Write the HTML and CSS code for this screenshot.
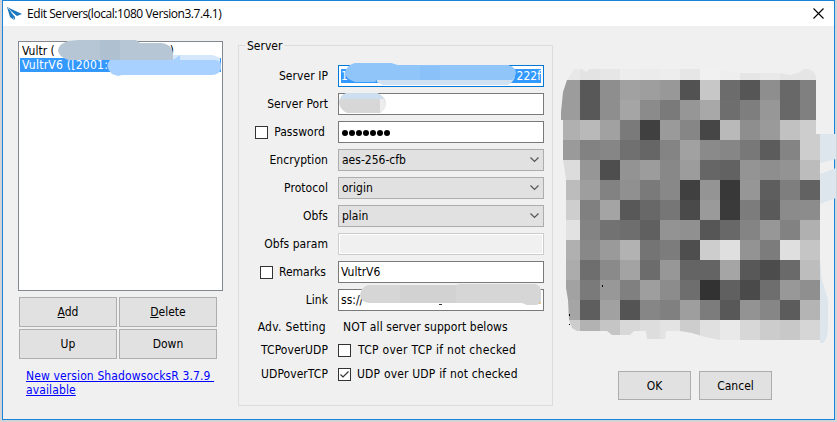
FILE: index.html
```html
<!DOCTYPE html>
<html lang="en">
<head>
<meta charset="utf-8">
<title>Edit Servers</title>
<link rel="stylesheet" href="styles.css">
</head>
<body>
<div class="window">
  <header class="titlebar">
    <svg class="logo" width="16" height="16" viewBox="0 0 16 16"><path d="M0 1L15 8L10 10L3 5L8 11L8 14L6 11L3 11Z" fill="#1d78bd"/><path d="M3 11L6 11L7 14Z" fill="#1d78bd"/><path d="M1 2L9 10" stroke="#fff" stroke-width=".6"/></svg>
    <h1 class="title">Edit Servers(local:1080 Version3.7.4.1)</h1>
    <svg class="close" width="11" height="11" viewBox="0 0 11 11"><path d="M.5 .5L10.5 10.5M10.5 .5L.5 10.5" stroke="#000" stroke-width="1.1"/></svg>
  </header>
  <main class="content">
    <section class="servers">
      <div class="list">
        <div class="item">Vultr (<span class="paren">)</span></div>
        <div class="item selected">VultrV6 ([2001:</div>
        <svg class="smudge list-smudge" width="166" height="37" viewBox="0 0 166 37"><path d="M10 1L20 0H78L82 3H103C112 4 115 9 115 14V20H10Q0 16 0 10Q1 4 10 1Z" fill="#b6c6d4"/><path d="M42 0H62V20H42Z" fill="#afc1d0"/><path d="M115 15H155L162 18V22H115Z" fill="#d5e7fa"/><path d="M52 20H122V15L115 20H158Q163 21 163 25V29Q161 35 153 35H64L60 36L54 34Q48 28 50 23Z" fill="#a9d1ff"/></svg>
      </div>
      <div class="actions">
        <button class="btn"><span><u>A</u>dd</span></button>
        <button class="btn"><span><u>D</u>elete</span></button>
        <button class="btn">Up</button>
        <button class="btn">Down</button>
      </div>
      <a class="update" href="#">New version ShadowsocksR 3.7.9&nbsp;<br>available</a>
    </section>

    <fieldset class="server">
      <legend>Server</legend>
      <div class="row"><label class="label">Server IP</label><div class="field focus"><span class="marked"><span>1</span><span>222f</span></span>
        <svg class="smudge ip-smudge" width="172" height="23" viewBox="0 0 172 23"><path d="M32 14H170Q167 21 162 22H38L32 19Z" fill="#d0e1f2"/><path d="M10 0H46L53 2H163Q171 4 171 10Q170 15 167 17H32L30 19H10Q0 16 0 9Q2 2 10 0Z" fill="#90c5fa"/><path d="M75 3H95V17H75Z" fill="#8ac1f9"/></svg></div></div>
      <div class="row"><label class="label">Server Port</label><div class="field">
        <svg class="smudge port-smudge" width="48" height="21" viewBox="0 0 48 21"><path d="M8 0H38Q47 4 47 11Q46 17 41 20H8Q0 16 0 9Q1 2 8 0Z" fill="#d7d7d8"/><path d="M8 0H38L43 3L45 6H1Q3 1 8 0Z" fill="#cddfee"/><path d="M41 6H45L47 11Q46 17 41 20Z" fill="#ededee"/></svg></div></div>
      <div class="row"><label class="label tick"><i class="check"></i>Password</label><div class="field"><span class="dots"><i></i><i></i><i></i><i></i><i></i><i></i><i></i></span></div></div>
      <div class="row"><label class="label">Encryption</label><div class="field select">aes-256-cfb<svg width="9" height="6" viewBox="0 0 9 6"><path d="M.5 .5L4.5 4.5L8.5 .5" fill="none" stroke="#555" stroke-width="1.2"/></svg></div></div>
      <div class="row"><label class="label">Protocol</label><div class="field select">origin<svg width="9" height="6" viewBox="0 0 9 6"><path d="M.5 .5L4.5 4.5L8.5 .5" fill="none" stroke="#555" stroke-width="1.2"/></svg></div></div>
      <div class="row"><label class="label">Obfs</label><div class="field select">plain<svg width="9" height="6" viewBox="0 0 9 6"><path d="M.5 .5L4.5 4.5L8.5 .5" fill="none" stroke="#555" stroke-width="1.2"/></svg></div></div>
      <div class="row"><label class="label">Obfs param</label><div class="field disabled"></div></div>
      <div class="row"><label class="label tick remarks"><i class="check"></i>Remarks</label><div class="field">VultrV6</div></div>
      <div class="row"><label class="label">Link</label><div class="field">ss://
        <svg class="smudge link-smudge" width="184" height="22" viewBox="0 0 184 22"><path d="M8 1H96L100 0H175Q181 1 181 8V17Q180 21 175 21H167L162 19H8Q0 17 0 11Q1 3 8 1Z" fill="#d6d6d6"/><path d="M40 1H96V19H40Z" fill="#d2d2d2"/><path d="M79 20.5H82" stroke="#333"/><path d="M180 18V20" stroke="#d9a441"/></svg></div></div>
      <div class="row adv"><label class="label">Adv. Setting</label><span class="note">NOT all server support belows</span></div>
      <div class="row opt"><label class="label">TCPoverUDP</label><i class="check"></i><span class="hint">TCP over TCP if not checked</span></div>
      <div class="row opt"><label class="label">UDPoverTCP</label><i class="check"><svg width="11" height="11" viewBox="0 0 11 11"><path d="M1.5 5.5L4 8L9.5 2.5" fill="none" stroke="#333" stroke-width="1.2"/></svg></i><span class="hint udp">UDP over UDP if not checked</span></div>
    </fieldset>

    <section class="side">
      <svg class="mosaic" width="276" height="280" viewBox="560 65 276 280">
        <defs><clipPath id="edge"><path d="M574 69H582L586 72L590 69H700L720 70L740 73H780L790 75L798 73L804 69Q814 68 816 77V134H820V340H720L705 337L692 333L680 331H666L665 339H647L646 331H634L630 335H612L607 331H577L572 328L569 320L568 300L566 288V180L565 172L563 160V120H561V112L563 92L567 80Z"/></clipPath></defs>
        <g fill="#dde5ed"><path d="M820 134H836V159L820 163ZM820 174L836 168V198L820 204ZM820 260L822 280L828 300V320Q829 338 823 343H820Z"/></g>
        <g id="cells" clip-path="url(#edge)" shape-rendering="crispEdges"></g>
        <path d="M602 285H603V287H602ZM569 314H570V316H569ZM569 324H570V325H569Z"/>
      </svg>
      <div class="confirm">
        <button class="btn">OK</button>
        <button class="btn">Cancel</button>
      </div>
    </section>
  </main>
</div>
<script src="mosaic.js"></script>
</body>
</html>
```
FILE: styles.css
```css
* { box-sizing: border-box; }
body {
  margin: 0;
  width: 837px;
  height: 422px;
  overflow: hidden;
  padding-left: 2px;
  background: #d2d4d7;
  font: 12px/14px "DejaVu Sans Condensed", "DejaVu Sans", sans-serif;
  font-stretch: condensed;
  color: #000;
}
.window { width: 833px; height: 420px; border: 1px solid #1883d7; background: #f0f0f0; }
.titlebar { height: 25px; display: flex; align-items: center; background: #fff; padding: 0 10px 0 4px; }
.title { margin: 0 auto 0 4px; font: 12px/16px "Open Sans", sans-serif; letter-spacing: -.44px; }
.close { display: block; }
.content { display: flex; height: 393px; }

.servers { width: 205px; margin: 15px 15px 0; }
.list { position: relative; height: 250px; padding: 2px 1px; border: 1px solid #828790; background: #fff; }
.item { height: 14px; padding-left: 2px; white-space: nowrap; }
.paren { margin-left: 115px; }
.selected { background: #3399ff; color: #fff; letter-spacing: .25px; }
.smudge { position: absolute; }
.list-smudge { left: 39px; top: -2px; }
.actions { display: grid; grid-template-columns: 98px 98px; grid-auto-rows: 30px; gap: 2px; margin: 6px 0 0 1px; }
.btn { display: flex; align-items: center; justify-content: center; padding: 0; border: 1px solid #adadad; background: #e1e1e1; font: inherit; color: inherit; }
.update { display: block; margin: 10px 0 0 8px; color: #0000ff; white-space: nowrap; letter-spacing: .12px; }

.server { position: relative; width: 315px; height: 368px; margin: 12px 0 0; padding: 0; border: 1px solid #dcdcdc; min-width: 0; }
.server legend { margin-left: 6px; padding: 0 2px; height: 15px; line-height: 16px; }
.row { display: flex; align-items: center; height: 22px; margin-bottom: 6px; }
.server legend + .row { margin-top: 12px; }
.label { width: 99px; padding-right: 10px; text-align: right; white-space: nowrap; letter-spacing: .06px; }
.tick { display: flex; align-items: center; justify-content: flex-end; padding-right: 13px; }
.tick .check { margin-right: 6px; }
.remarks { padding-right: 12px; letter-spacing: 0; }
.check { display: block; width: 13px; height: 13px; border: 1px solid #333; background: #fff; }
.check svg { display: block; }
.field { position: relative; width: 206px; height: 22px; padding: 3px 2px; border: 1px solid #7a7a7a; background: #fff; white-space: nowrap; }
.focus { border-color: #0078d7; }
.marked { display: flex; justify-content: space-between; background: #3399ff; color: #fff; }
.ip-smudge { left: 6px; top: -3px; }
.port-smudge { left: 0; top: -1px; }
.link-smudge { left: 21px; top: -6px; }
.dots { display: flex; gap: 1px; padding: 5px 0 0 1px; }
.dots i { width: 6px; height: 6px; border-radius: 50%; background: #000; }
.select { display: flex; align-items: center; justify-content: space-between; padding: 0 4px 0 3px; border-color: #adadad; background: #e1e1e1; }
.disabled { border-color: #ccc; background: #f0f0f0; box-shadow: inset 0 0 0 1px #fff; }
.adv { height: 14px; margin: 9px 0; }
.adv .label { padding-right: 12px; letter-spacing: .28px; }
.note { margin-left: 5px; white-space: nowrap; letter-spacing: .07px; }
.opt { height: 14px; margin: 0 0 10px; }
.hint { margin-left: 7px; white-space: nowrap; letter-spacing: .29px; }
.udp { margin-left: 6px; letter-spacing: .18px; }

.side { margin: 39px 0 0 7px; width: 274px; }
.mosaic { display: block; }
.confirm { display: flex; gap: 8px; margin: 26px 0 0 58px; }
.confirm .btn { width: 73px; height: 29px; }
```
FILE: mosaic.js
```js
// Grey level of each 20px tile, one row of hex pairs per line.
const rows = [
  "e8e3e6edebede6f1eee5e9e5e5",
  "9c588ea19e9852c76c568e6880",
  "9c588ea58b7a96a86e7e976880",
  "b0b9a17a409a8646b98e9ac1cd",
  "9a8286706684a18a86785c84cd",
  "dc964e939c889c6662948e93bc",
  "bc9e82907a88409438965e7e62",
  "ce80a45868764a9a3a7c5a8b8c",
  "e283726e6093905668849782b0",
  "b0889ab2747c4ecddf937cdfc5",
  "ac6e8aa36c976464a5584c6abd",
  "a27a98809e8c6e32604a6e988f",
  "a55ea15486809e7c5893865cb4",
  "cdb2c5d8dde3cde0e9d7ccc8d6"
];
const cells = document.getElementById("cells");
rows.forEach((row, r) => {
  row.match(/../g).forEach((v, c) => {
    const tile = document.createElementNS("http://www.w3.org/2000/svg", "rect");
    tile.setAttribute("x", 560 + c * 20);
    tile.setAttribute("y", 60 + r * 20);
    tile.setAttribute("width", 20);
    tile.setAttribute("height", 20);
    tile.setAttribute("fill", "#" + v + v + v);
    cells.appendChild(tile);
  });
});
```
